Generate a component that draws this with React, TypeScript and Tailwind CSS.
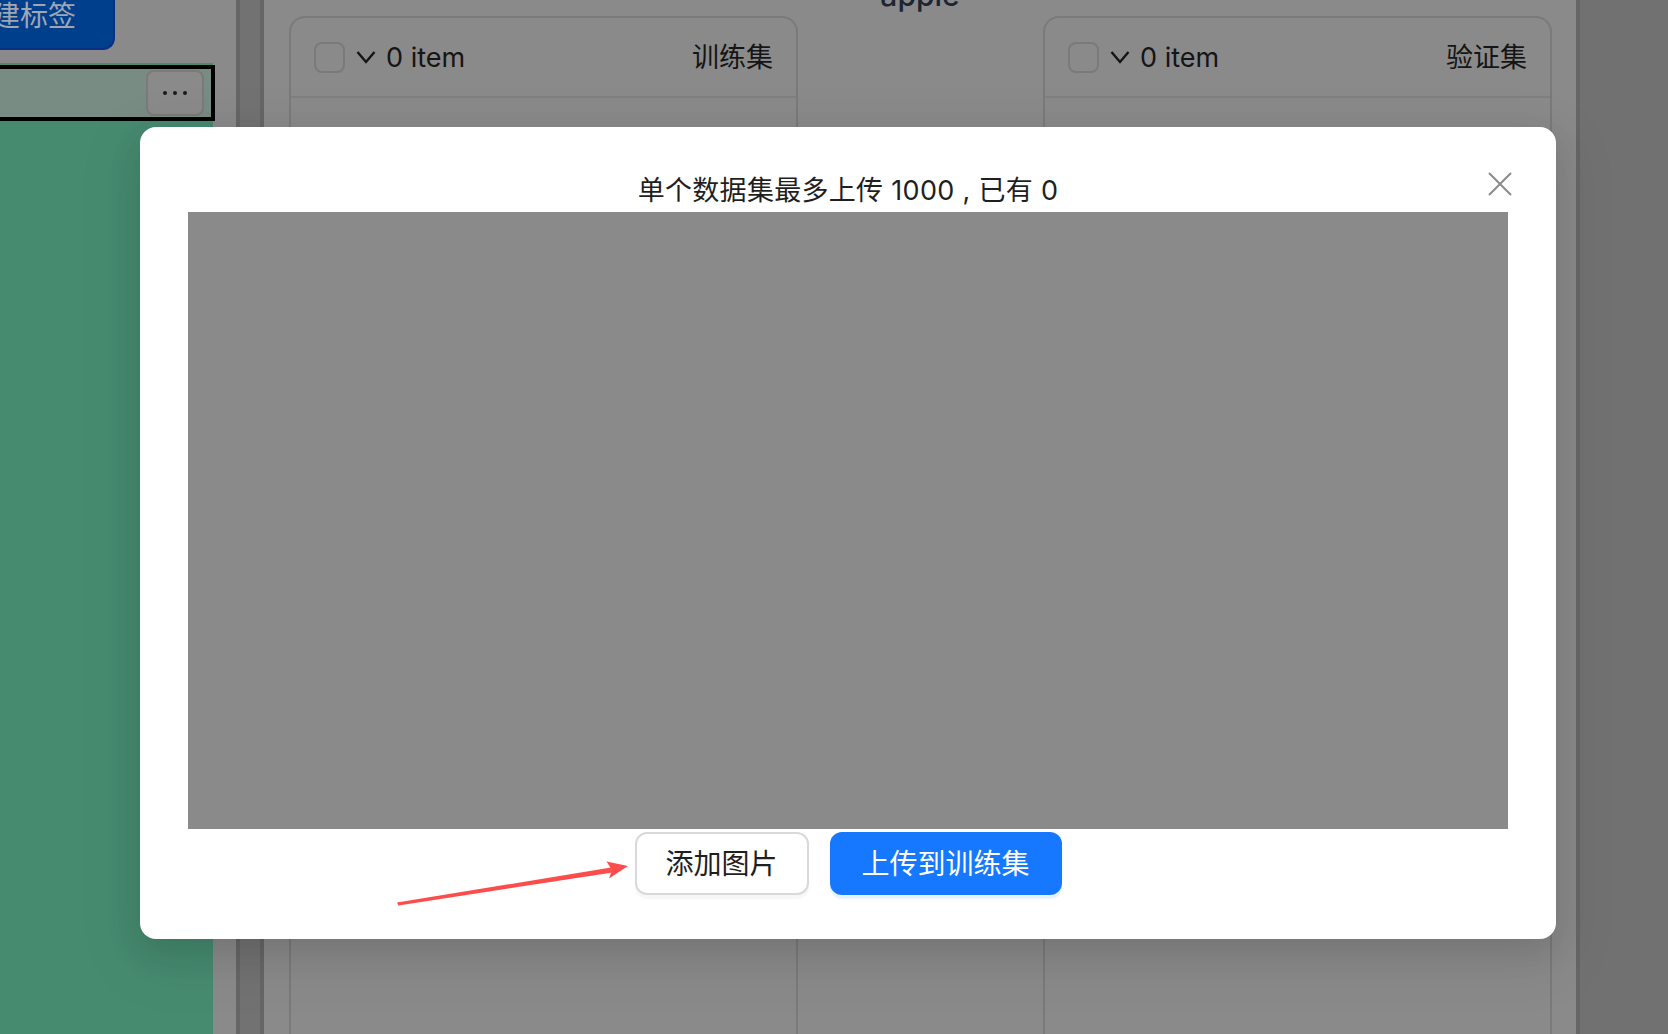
import React from 'react'

const ListPanel = ({ title }: { title: string }) => (
  <div className="w-[509px] h-[1040px] rounded-t-[16px] border-2 border-[#7a7a7a] border-b-0">
    <div className="h-[80px] flex items-center justify-between pl-[23px] pr-[23px] border-b-2 border-[#808080]">
      <div className="flex items-center">
        <div className="w-[31px] h-[31px] rounded-[8px] border-2 border-[#7a7a7a] bg-[#8a8a8a]" />
        <svg className="ml-[11px] w-[20px] h-[14px]" viewBox="0 0 20 14" fill="none">
          <polyline points="1.5,2 10,12 18.5,2" stroke="#151515" strokeWidth="2.4" />
        </svg>
        <span className="ml-[10px] text-[27px] leading-none text-[#151515]">0 item</span>
      </div>
      <span className="text-[27px] leading-none text-[#151515]">{title}</span>
    </div>
  </div>
)

export default function App() {
  return (
    <div className="relative w-[1668px] h-[1034px] overflow-hidden flex bg-[#8a8a8a] font-[family-name:Inter,'Noto_Sans_CJK_SC',sans-serif]">
      {/* left column */}
      <div className="w-[213px] shrink-0 flex flex-col">
        <div className="h-[63px] bg-[#8a8a8a]">
          <div className="-mt-[20px] h-[70px] w-[115px] rounded-br-[12px] bg-[#003f8c] border-r-2 border-b-2 border-[#0c2f86] flex items-center pt-[4px] overflow-hidden">
            <span className="-ml-[8px] text-[28px] leading-none text-[#a0a6b4] whitespace-nowrap">建标签</span>
          </div>
        </div>
        <div className="flex-1 bg-[#468b70] pt-[2px]">
          <div className="-ml-[4px] w-[219px] h-[56px] border-4 border-black bg-[#788c84] flex items-center justify-end pr-[7px]">
            <div className="w-[58px] h-[46px] rounded-[8px] border-2 border-[#7a7a7a] bg-[#8a8a8a] flex items-center justify-center gap-[6px]">
              <span className="w-[4px] h-[4px] rounded-full bg-[#1a1a1a]" />
              <span className="w-[4px] h-[4px] rounded-full bg-[#1a1a1a]" />
              <span className="w-[4px] h-[4px] rounded-full bg-[#1a1a1a]" />
            </div>
          </div>
        </div>
      </div>

      {/* gap + splitter */}
      <div className="w-[23px] shrink-0" />
      <div className="w-[28px] shrink-0 border-x-4 border-[#666666] bg-[#727272]" />

      {/* main */}
      <div className="w-[1312px] shrink-0 flex flex-col">
        <div className="-mt-[20px] h-[30px] text-center text-[30px] leading-[30px] font-medium text-[#1c2533]">apple</div>
        <div className="mt-[6px] flex justify-between pl-[25px] pr-[24px]">
          <ListPanel title="训练集" />
          <ListPanel title="验证集" />
        </div>
      </div>
      <div className="w-[4px] shrink-0 bg-[#666666]" />
      <div className="flex-1 bg-[#717171]" />

      {/* modal */}
      <div className="absolute left-[140px] top-[127px] w-[1416px] rounded-[16px] bg-white flex flex-col items-center shadow-[0_12px_32px_0_rgba(0,0,0,0.1),0_18px_56px_16px_rgba(0,0,0,0.06)]">
        <button className="absolute top-[45px] right-[44px] w-[24px] h-[24px]">
          <svg viewBox="0 0 24 24" className="w-[24px] h-[24px]" fill="none">
            <path d="M1 1L23 23M23 1L1 23" stroke="#8a8a8a" strokeWidth="2" />
          </svg>
        </button>
        <div className="pt-[47px] h-[80px] text-[27px] leading-[33px] text-[#1f1f1f] tracking-[0.3px]">单个数据集最多上传 1000 , 已有 0</div>
        <div className="mt-[5px] w-[1320px] h-[617px] bg-[#8a8a8a]" />
        <div className="mt-[3px] flex gap-[21px] pb-[44px]">
          <button className="w-[174px] h-[63px] rounded-[12px] border-2 border-[#d9d9d9] bg-white text-[28px] text-[#1f1f1f] shadow-[0_4px_0_rgba(0,0,0,0.03)]">添加图片</button>
          <button className="w-[232px] h-[63px] rounded-[12px] bg-[#1677ff] text-[28px] text-white shadow-[0_4px_0_#e6f4ff]">上传到训练集</button>
        </div>
      </div>

      {/* annotation arrow */}
      <svg className="absolute left-0 top-0 w-[1668px] h-[1034px] pointer-events-none" viewBox="0 0 1668 1034">
        <polygon points="397,902.6 611,867.6 612.6,872.6 398.4,905.4" fill="#fd4c4c" />
        <polygon points="628,866 606.5,861.5 612,870 609,878.5" fill="#fd4c4c" />
      </svg>
    </div>
  )
}
